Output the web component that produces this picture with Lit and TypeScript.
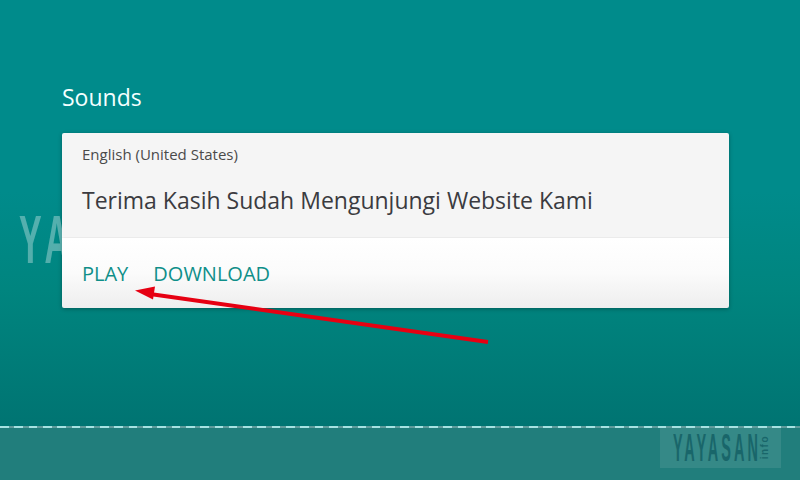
import { LitElement, html, css } from "lit";
import { customElement } from "lit/decorators.js";

@customElement("app-root")
export class AppRoot extends LitElement {
  static styles = css`
    :host { display: block; width: 800px; height: 480px; overflow: hidden; position: relative; font-family: "Open Sans", sans-serif; }
    .page { display: flex; flex-direction: column; height: 480px; }
    .main { height: 426px; box-sizing: border-box; padding: 80px 71px 0 62px; background: linear-gradient(#008b8b 0%, #008b8b 45%, #00857f 68%, #007472 100%); }
    .title { margin: 0 0 19px; height: 34px; font-size: 23px; line-height: 34px; font-weight: 400; color: #f4ffff; }
    .card { position: relative; border-radius: 2px; overflow: hidden; box-shadow: 0 1px 4px rgba(0,0,0,.3); }
    .head { height: 105px; box-sizing: border-box; padding: 11px 20px 0; background: #f5f5f5; border-bottom: 1px solid #ebebeb; }
    .lang { font-size: 15px; line-height: 21px; color: #4a4a4a; }
    .phrase { margin-top: 19px; font-size: 23px; line-height: 32px; color: #3b3b40; }
    .actions { height: 70px; box-sizing: border-box; padding: 21px 20px 0; display: flex; gap: 25px; background: linear-gradient(#ffffff 0%, #fbfbfb 50%, #eeeeee 100%); }
    .action { font-size: 20px; line-height: 30px; color: #0f8f89; }
    .footer { position: relative; flex: 1; background: #217e7c; display: flex; flex-direction: column; }
    .dash { height: 2px; background: repeating-linear-gradient(90deg, #a6e2e2 0 8.600px, #5f9c9c 8.600px 14.300px); }
    .logo-row { display: flex; justify-content: flex-end; padding-right: 19px; }
    .logo { width: 121px; height: 40px; background: rgba(255,255,255,.09); display: flex; align-items: center; justify-content: center; color: #19666a; overflow: hidden; }
    .logo-word { display: block; width: 88px; height: 38px; font-family: "Liberation Sans", sans-serif; font-size: 38px; line-height: 38px; font-weight: 700; letter-spacing: 8px; transform: scaleX(.38); transform-origin: left center; white-space: nowrap; }
    .logo-side { writing-mode: vertical-rl; transform: rotate(180deg); font-family: "Liberation Sans", sans-serif; font-size: 10px; font-weight: 700; line-height: 8px; letter-spacing: 1.500px; margin-bottom: 2px; }
    .mark { position: absolute; left: 19px; top: 205px; font-family: "Liberation Sans", sans-serif; font-weight: 700; font-size: 68px; line-height: 68px; letter-spacing: 12px; color: rgba(255,255,255,.33); transform: scaleX(.5); transform-origin: left top; white-space: nowrap; }
    .arrow { position: absolute; left: 0; top: 0; pointer-events: none; }
  `;

  render() {
    return html`
      <div class="page">
        <div class="main">
          <h2 class="title">Sounds</h2>
          <div class="card">
            <div class="head">
              <div class="lang">English (United States)</div>
              <div class="phrase">Terima Kasih Sudah Mengunjungi Website Kami</div>
            </div>
            <div class="actions">
              <span class="action">PLAY</span>
              <span class="action">DOWNLOAD</span>
            </div>
          </div>
        </div>
        <div class="footer">
          <div class="dash"></div>
          <div class="logo-row">
            <div class="logo">
              <span class="logo-word">YAYASAN</span>
              <span class="logo-side">info</span>
            </div>
          </div>
        </div>
      </div>
      <div class="mark">YA</div>
      <svg class="arrow" width="800" height="480" viewBox="0 0 800 480">
        <line x1="488" y1="342" x2="150" y2="294" stroke="#e60012" stroke-width="4"/>
        <polygon points="135,290.500 155,286.500 153,299.500" fill="#e60012"/>
      </svg>
    `;
  }
}
